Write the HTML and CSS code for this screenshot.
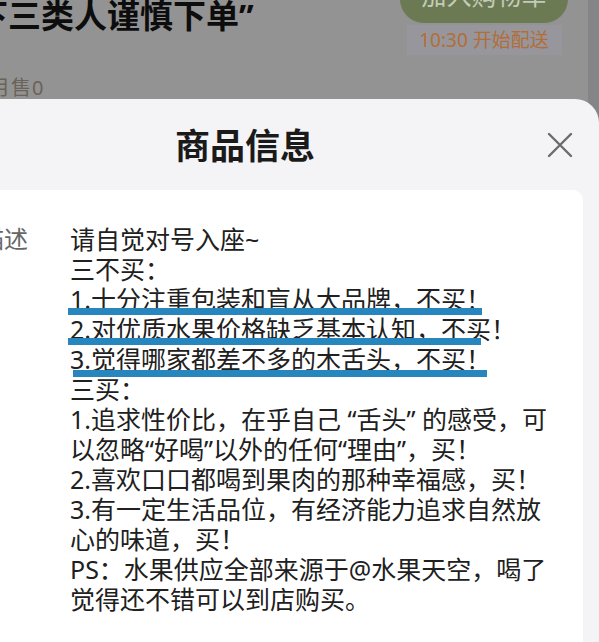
FILE: index.html
```html
<!DOCTYPE html>
<html lang="zh-CN">
<head>
<meta charset="utf-8">
<title>商品信息</title>
<link rel="stylesheet" href="styles.css">
</head>
<body>
<div class="top">
  <div class="product">
    <h1 class="product-title">下三类人谨慎下单”</h1>
    <div class="sales">月售0</div>
  </div>
  <div class="buy">
    <div class="cart-btn">加入购物车</div>
    <div class="delivery">10:30 开始配送</div>
  </div>
</div>
<div class="sheet">
  <div class="sheet-head">
    <h2 class="sheet-title">商品信息</h2>
    <svg class="close" width="26" height="26" viewBox="0 0 26 26"><path d="M2 2 L24 24 M24 2 L2 24" stroke="#6b6b6b" stroke-width="2.4" fill="none" stroke-linecap="round"/></svg>
  </div>
  <div class="card">
    <div class="label">描述</div>
    <div class="desc">
      请自觉对号入座~<br>
      三不买：<br>
      1.十分注重包装和盲从大品牌，不买！<br>
      2.对优质水果价格缺乏基本认知，不买！<br>
      3.觉得哪家都差不多的木舌头，不买！<br>
      三买：<br>
      1.追求性价比，在乎自己 “舌头” 的感受，可<br>
      以忽略“好喝”以外的任何“理由”，买！<br>
      2.喜欢口口都喝到果肉的那种幸福感，买！<br>
      3.有一定生活品位，有经济能力追求自然放<br>
      心的味道，买！<br>
      PS：水果供应全部来源于@水果天空，喝了<br>
      觉得还不错可以到店购买。
      <span class="mark mark-1"></span>
      <span class="mark mark-2"></span>
      <span class="mark mark-3"></span>
    </div>
  </div>
</div>
</body>
</html>
```
FILE: styles.css
```css
html, body {
  margin: 0;
  padding: 0;
}
body {
  width: 599px;
  height: 642px;
  overflow: hidden;
  font-family: "Noto Sans", "Noto Sans CJK SC", sans-serif;
  background: linear-gradient(to right, #939393 588px, #858587 588px);
}
.top {
  height: 99px;
  display: flex;
  justify-content: space-between;
  overflow: hidden;
}
.product {
  margin-left: -25px;
}
.product-title {
  margin: 0;
  font-size: 33px;
  line-height: 32px;
  font-weight: 700;
  color: #0d0d0d;
  white-space: nowrap;
}
.sales {
  margin: 46px 0 0 15px;
  font-size: 20px;
  line-height: 20px;
  color: #6a6359;
  letter-spacing: 1px;
}
.buy {
  width: 168px;
  margin-right: 31px;
  display: flex;
  flex-direction: column;
  align-items: center;
}
.cart-btn {
  width: 168px;
  height: 56px;
  margin-top: -33px;
  border-radius: 24px;
  background: #6b7a53;
  color: #c3cbb8;
  font-size: 25px;
  line-height: 56px;
  text-align: center;
}
.delivery {
  margin-top: 2px;
  width: 155px;
  height: 30px;
  background: #96969c;
  color: #b36e37;
  font-size: 19px;
  line-height: 30px;
  text-align: center;
}
.sheet {
  height: 543px;
  background: #f4f4f6;
  border-top-right-radius: 24px;
  display: flex;
  flex-direction: column;
}
.sheet-head {
  height: 91px;
  display: flex;
  align-items: flex-start;
}
.sheet-title {
  margin: 27px 0 0 175px;
  font-size: 35px;
  line-height: 40px;
  font-weight: 700;
  color: #1a1a1a;
}
.close {
  margin: 33px 26px 0 auto;
}
.card {
  flex: 1;
  margin-right: 16px;
  background: #ffffff;
  border-top-right-radius: 10px;
  padding-top: 34px;
  display: flex;
  align-items: flex-start;
}
.label {
  margin-left: -20px;
  width: 90px;
  flex: none;
  font-size: 24px;
  line-height: 30px;
  color: #666666;
}
.desc {
  position: relative;
  flex: 1;
  font-size: 25px;
  line-height: 30px;
  color: #202020;
  white-space: nowrap;
}
.mark {
  position: absolute;
  height: 7px;
  background: #2886bf;
}
.mark-1 { left: -2px; top: 84px; width: 414px; }
.mark-2 { left: -2px; top: 114px; width: 413px; }
.mark-3 { left: 3px; top: 146px; width: 414px; }
```
